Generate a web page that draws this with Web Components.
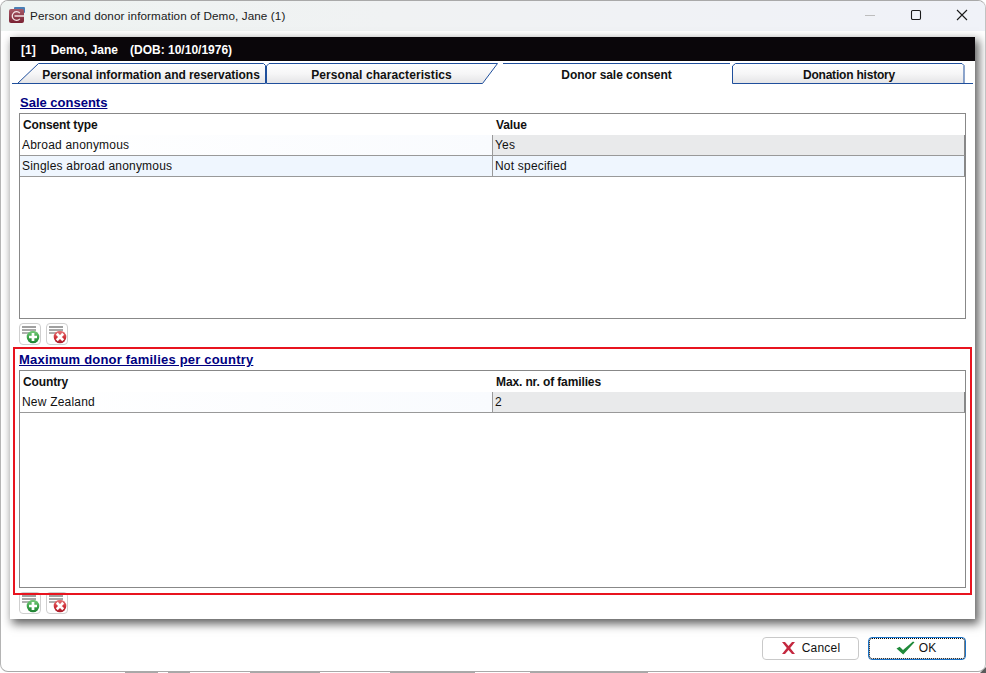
<!DOCTYPE html>
<html>
<head>
<meta charset="utf-8">
<title>Person and donor information</title>
<style>
  html, body { margin: 0; height: 100%; background: #fff; overflow: hidden; }
  body { font: 12px "Liberation Sans", Arial, sans-serif; color: #000; }
</style>
</head>
<body>
<template id="icon-add">
  <svg width="20" height="20" viewBox="0 0 20 20">
    <defs>
      <linearGradient id="green" x1="0" y1="0" x2="0" y2="1">
        <stop offset="0" stop-color="#7ccb7f"/>
        <stop offset=".55" stop-color="#3aa348"/>
        <stop offset="1" stop-color="#1e7f33"/>
      </linearGradient>
    </defs>
    <rect x="2" y="2" width="14" height="2" fill="#a0a0a0"/>
    <rect x="2" y="5" width="14" height="2" fill="#a8a8a8"/>
    <rect x="2" y="8" width="9" height="2" fill="#b0b0b0"/>
    <circle cx="13" cy="13" r="6.300" fill="url(#green)"/>
    <path d="M13 9v8M9 13h8" stroke="#fff" stroke-width="2.700"/>
  </svg>
</template>
<template id="icon-remove">
  <svg width="20" height="20" viewBox="0 0 20 20">
    <defs>
      <linearGradient id="red" x1="0" y1="0" x2="0" y2="1">
        <stop offset="0" stop-color="#e67a7c"/>
        <stop offset=".55" stop-color="#cf3038"/>
        <stop offset="1" stop-color="#a81c2a"/>
      </linearGradient>
    </defs>
    <rect x="2" y="2" width="14" height="2" fill="#a0a0a0"/>
    <rect x="2" y="5" width="14" height="2" fill="#a8a8a8"/>
    <rect x="2" y="8" width="9" height="2" fill="#b0b0b0"/>
    <circle cx="13" cy="13" r="6.300" fill="url(#red)"/>
    <path d="M9.800 9.800l6.400 6.400M16.200 9.800l-6.400 6.400" stroke="#fff" stroke-width="2.700"/>
  </svg>
</template>

<app-window caption="Person and donor information of Demo, Jane (1)">
  <patient-panel>
    <patient-bar></patient-bar>
    <tab-strip></tab-strip>

    <data-section heading="Sale consents">
      <data-table height="206" col1="Consent type" col2="Value"
        rows='[["Abroad anonymous","Yes",""],["Singles abroad anonymous","Not specified","alt"]]'></data-table>
      <row-tools></row-tools>
    </data-section>

    <data-section heading="Maximum donor families per country" marked>
      <data-table height="218" col1="Country" col2="Max. nr. of families"
        rows='[["New Zealand","2",""]]'></data-table>
      <row-tools></row-tools>
    </data-section>
  </patient-panel>

  <dialog-buttons slot="footer"></dialog-buttons>
</app-window>
<backdrop-strip></backdrop-strip>

<script>
class AppWindow extends HTMLElement {
  connectedCallback() {
    const shadow = this.attachShadow({ mode: 'open' });
    shadow.innerHTML = `
      <style>
        :host {
          display: flex;
          flex-direction: column;
          box-sizing: border-box;
          width: 986px;
          height: 672px;
          background: #fff;
          border: 1px solid #a9a9a9;
          border-left-color: #b4b4b4;
          border-right-color: #c2c2c2;
          border-radius: 8px;
          overflow: hidden;
          position: relative;
        }
        .title {
          display: flex;
          align-items: center;
          box-sizing: border-box;
          height: 30px;
          flex: none;
          background: linear-gradient(90deg, #eef3f1 0%, #f0f2f3 40%, #f0f2f8 100%);
          padding: 0 0 2px 8px;
          color: #1a1a1a;
        }
        .logo { margin-right: 5px; flex: none; }
        .text { flex: 1; font: 11.7px "Liberation Sans", sans-serif; letter-spacing: .1px; }
        .ctl { width: 46px; height: 28px; display: flex; align-items: center; justify-content: center; flex: none; }
        .body { flex: 1; display: flex; flex-direction: column; min-height: 0; }
        .foot { flex: none; }
      </style>
      <div class="title">
        <svg class="logo" width="16" height="16" viewBox="0 0 16 16">
          <defs>
            <linearGradient id="lg" x1="0" y1="0" x2="0" y2="1">
              <stop offset="0" stop-color="#a85a68"/>
              <stop offset="1" stop-color="#7a2232"/>
            </linearGradient>
          </defs>
          <rect x="5" y="0" width="11" height="6" rx="1" fill="#4a7fb5"/>
          <rect x="0" y="2" width="15" height="14" rx="2" fill="url(#lg)"/>
          <path d="M10.800 6.200A4.300 4.300 0 1 0 10.800 11.800" fill="none" stroke="#f3e4e6" stroke-width="1.300"/>
          <path d="M5.500 9H15" stroke="#f3e4e6" stroke-width="1.300"/>
        </svg>
        <span class="text">${this.getAttribute('caption')}</span>
        <span class="ctl"><svg width="12" height="12"><path d="M1 6.500h10" stroke="#bdbdbd"/></svg></span>
        <span class="ctl"><svg width="12" height="12"><rect x="1.500" y="1.500" width="9" height="9" rx="1.200" fill="none" stroke="#1a1a1a" stroke-width="1.100"/></svg></span>
        <span class="ctl"><svg width="12" height="12"><path d="M1 1l10 10M11 1L1 11" stroke="#1a1a1a" stroke-width="1.100"/></svg></span>
      </div>
      <div class="body"><slot></slot></div>
      <div class="foot"><slot name="footer"></slot></div>
    `;
  }
}

class PatientPanel extends HTMLElement {
  connectedCallback() {
    const shadow = this.attachShadow({ mode: 'open' });
    shadow.innerHTML = `
      <style>
        :host {
          display: flex;
          flex-direction: column;
          box-sizing: border-box;
          flex: none;
          height: 582px;
          margin: 6px 10px 0 9px;
          background: #fff;
          box-shadow: 3px 4px 9px 1px rgba(0,0,0,.62);
        }
      </style>
      <slot></slot>
    `;
  }
}

class PatientBar extends HTMLElement {
  connectedCallback() {
    const shadow = this.attachShadow({ mode: 'open' });
    shadow.innerHTML = `
      <style>
        :host {
          display: flex;
          align-items: center;
          gap: 15px;
          box-sizing: border-box;
          height: 24px;
          flex: none;
          background: #0a060a;
          color: #fff;
          font: bold 12px "Liberation Sans", sans-serif;
          padding: 1px 0 0 11px;
          white-space: pre;
        }
        .name { margin-right: -3px; }
      </style>
      <span>[1]</span><span class="name">Demo, Jane</span><span>(DOB: 10/10/1976)</span>
    `;
  }
}

class TabStrip extends HTMLElement {
  connectedCallback() {
    const shadow = this.attachShadow({ mode: 'open' });
    shadow.innerHTML = `
      <style>
        :host {
          display: flex;
          flex: none;
          height: 24px;
          padding-left: 1px;
          position: relative;
          font: bold 12px "Liberation Sans", sans-serif;
          color: #111;
        }
        .tab { position: relative; display: flex; align-items: center; justify-content: center; flex: none; padding-top: 4px; box-sizing: border-box; }
        .tab svg { position: absolute; left: 0; top: 0; }
        .tab span { position: relative; white-space: nowrap; }
      </style>
      <svg width="0" height="0" style="position:absolute">
        <defs>
          <linearGradient id="tabfill" x1="0" y1="0" x2="0" y2="1">
            <stop offset="0" stop-color="#ffffff"/>
            <stop offset=".5" stop-color="#f6f6f7"/>
            <stop offset="1" stop-color="#e4e4e6"/>
          </linearGradient>
        </defs>
      </svg>
      <div class="tab" style="width:255px;padding-left:25px;letter-spacing:-.05px">
        <svg width="255" height="24">
          <path d="M6.500 22.500L27.500 2.500H252.500L254.500 4.500V22.500z" fill="url(#tabfill)" stroke="#1f4f9c"/>
          <path d="M1 22.500H7" stroke="#1f4f9c"/>
        </svg>
        <span>Personal information and reservations</span>
      </div>
      <div class="tab" style="width:235px;padding-right:4px;letter-spacing:.08px">
        <svg width="235" height="24">
          <path d="M.5 22.500V5L3 2.500H231.500L216.500 22.500H.5z" fill="url(#tabfill)" stroke="#1f4f9c"/>
        </svg>
        <span>Personal characteristics</span>
      </div>
      <div class="tab" style="width:231px;letter-spacing:-.05px">
        <svg width="231" height="24">
          <path d="M2 2.500H229" fill="none" stroke="#1f4f9c"/>
        </svg>
        <span>Donor sale consent</span>
      </div>
      <div class="tab" style="width:232px;padding-left:2px;letter-spacing:-.2px">
        <svg width="242" height="24">
          <path d="M.5 22.500V5L3.500 2.500H230L232 4.500V22.500H.5z" fill="url(#tabfill)" stroke="#1f4f9c"/>
          <path d="M232 22.500H241" stroke="#1f4f9c"/>
        </svg>
        <span>Donation history</span>
      </div>
    `;
  }
}

class DataSection extends HTMLElement {
  connectedCallback() {
    const shadow = this.attachShadow({ mode: 'open' });
    const marked = this.hasAttribute('marked');
    shadow.innerHTML = `
      <style>
        :host {
          display: block;
          flex: none;
          position: relative;
          padding: 0 9px 0 9px;
        }
        h2 {
          margin: 0;
          height: 28px;
          padding: 10px 0 0 1px;
          box-sizing: border-box;
          font: bold 13px/16px "Liberation Sans", sans-serif;
          color: #00007f;
          text-decoration: underline;
          letter-spacing: 0;
        }
        :host([marked]) h2 { height: 23px; padding-top: 5px; padding-left: 0; letter-spacing: .2px; }
        .mark {
          position: absolute;
          left: 3px;
          right: 3px;
          top: 0;
          height: 244px;
          border: 2px solid #e8141f;
          pointer-events: none;
        }
      </style>
      <h2>${this.getAttribute('heading')}</h2>
      <slot></slot>
      ${marked ? '<div class="mark"></div>' : ''}
    `;
  }
}

class DataTable extends HTMLElement {
  connectedCallback() {
    const shadow = this.attachShadow({ mode: 'open' });
    const rows = JSON.parse(this.getAttribute('rows'));
    const h = this.getAttribute('height');
    shadow.innerHTML = `
      <style>
        :host {
          display: block;
          box-sizing: border-box;
          height: ${h}px;
          border: 1px solid #888;
          background: #fff;
          font: 12px "Liberation Sans", sans-serif;
          color: #111;
        }
        .row { display: grid; grid-template-columns: 472px 1fr; height: 21px; box-sizing: border-box; }
        .head { font-weight: bold; letter-spacing: -.12px; }
        .head div { padding: 4px 0 0 3px; line-height: 14px; }
        .cell { padding: 3px 0 0 2px; line-height: 14px; box-sizing: border-box; border-bottom: 1px solid #999; letter-spacing: .2px; }
        .name { background: linear-gradient(90deg, #fff, #f9fbfe); }
        .val { background: #e9eaeb; border-left: 1px solid #999; border-right: 1px solid #888; }
        .alt .name, .alt .val { background: #eff6fe; }
      </style>
      <div class="row head"><div>${this.getAttribute('col1')}</div><div style="padding-left:4px">${this.getAttribute('col2')}</div></div>
      ${rows.map(r => `<div class="row ${r[2]}"><div class="cell name">${r[0]}</div><div class="cell val">${r[1]}</div></div>`).join('')}
    `;
  }
}

class RowTools extends HTMLElement {
  connectedCallback() {
    const shadow = this.attachShadow({ mode: 'open' });
    shadow.innerHTML = `
      <style>
        :host { display: flex; gap: 5px; padding: 4px 0 2px 0; height: 22px; }
        button {
          width: 22px; height: 22px; padding: 0;
          display: flex; align-items: center; justify-content: center;
          box-sizing: border-box;
          background: #fff;
          border: 1px solid #cfcfcf;
          border-radius: 4px;
        }
      </style>
      <button></button><button></button>
    `;
    const buttons = shadow.querySelectorAll('button');
    buttons[0].append(document.getElementById('icon-add').content.cloneNode(true));
    buttons[1].append(document.getElementById('icon-remove').content.cloneNode(true));
  }
}

class DialogButtons extends HTMLElement {
  connectedCallback() {
    const shadow = this.attachShadow({ mode: 'open' });
    shadow.innerHTML = `
      <style>
        :host {
          display: flex;
          justify-content: flex-end;
          gap: 9px;
          padding: 18px 19px 0 0;
          height: 34px;
        }
        button {
          width: 97px; height: 23px; padding: 0 0 1px 0;
          display: flex; align-items: center; justify-content: center; gap: 6px;
          box-sizing: border-box;
          background: #fff;
          border: 1px solid #c9c9c9;
          border-radius: 4px;
          font: 12px "Liberation Sans", sans-serif;
          letter-spacing: .2px;
          color: #111;
        }
        button.ok { width: 98px; gap: 4px; padding-right: 2px; border-color: #1a73c8; outline: 1px dotted #000; outline-offset: -2px; }
      </style>
      <button>
        <svg width="15" height="14" viewBox="0 0 15 14"><path d="M1 1h3l3.500 4L11 1h3L9.200 7 14 13h-3L7.500 9 4 13H1l4.800-6z" fill="#c4283f"/></svg>
        Cancel
      </button>
      <button class="ok">
        <svg width="19" height="14" viewBox="0 0 19 14"><path d="M0.500 7.500l3.200-1.700L7 9 17 .5l1.500 .8L7.200 13.500z" fill="#1f8a3a"/></svg>
        OK
      </button>
    `;
  }
}

// Обрезанный текст окна позади диалога, виден в нижней строке
class BackdropStrip extends HTMLElement {
  connectedCallback() {
    const shadow = this.attachShadow({ mode: 'open' });
    const bits = [[125, 158], [168, 190], [250, 320], [390, 475], [530, 648]];
    const stops = bits.map(([a, b]) =>
      `transparent ${a}px, #a8a8a8 ${a}px, #a8a8a8 ${b}px, transparent ${b}px`).join(', ');
    shadow.innerHTML = `
      <style>
        :host { display: block; height: 1px; background: linear-gradient(90deg, ${stops}); position: relative; }
        svg { position: absolute; right: 0; bottom: 0; }
      </style>
      <svg width="6" height="6"><path d="M6 0V6H0z" fill="#5a5a5a"/></svg>
    `;
  }
}

customElements.define('app-window', AppWindow);
customElements.define('patient-panel', PatientPanel);
customElements.define('patient-bar', PatientBar);
customElements.define('tab-strip', TabStrip);
customElements.define('data-section', DataSection);
customElements.define('data-table', DataTable);
customElements.define('row-tools', RowTools);
customElements.define('dialog-buttons', DialogButtons);
customElements.define('backdrop-strip', BackdropStrip);
</script>
</body>
</html>
